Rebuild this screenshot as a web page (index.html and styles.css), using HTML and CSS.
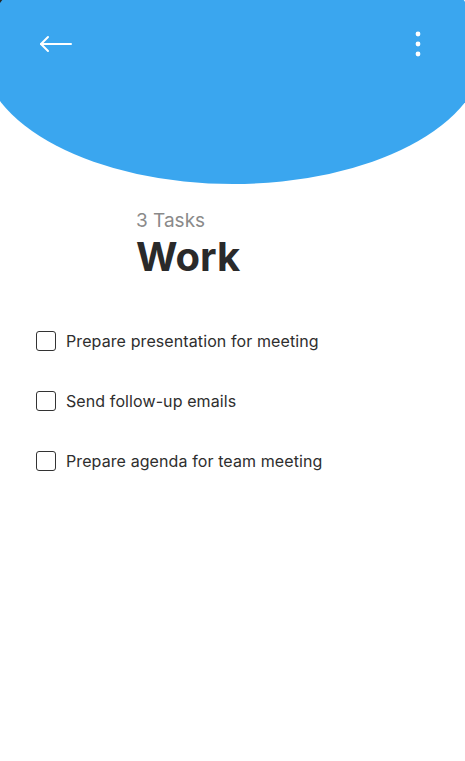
FILE: index.html
```html
<!DOCTYPE html>
<html lang="en">
<head>
<meta charset="utf-8">
<title>Work</title>
<link rel="stylesheet" href="styles.css">
</head>
<body>
<div class="app">
  <header class="hero">
    <div class="hero-bg"></div>
    <div class="topbar">
      <button class="icon-btn back" aria-label="Back">
        <svg width="34" height="18" viewBox="0 0 34 18" fill="none" stroke="#fff" stroke-width="2" stroke-linecap="round" stroke-linejoin="round">
          <path d="M3 9 H33"/>
          <path d="M10 2 L3 9 L10 16"/>
        </svg>
      </button>
      <button class="icon-btn more" aria-label="More">
        <svg width="6" height="26" viewBox="0 0 6 26" fill="#fff">
          <circle cx="3" cy="3" r="2.4"/>
          <circle cx="3" cy="13" r="2.4"/>
          <circle cx="3" cy="23" r="2.4"/>
        </svg>
      </button>
    </div>
  </header>
  <section class="title-block">
    <div class="count">3 Tasks</div>
    <h1 class="title">Work</h1>
  </section>
  <ul class="tasks">
    <li class="task"><span class="check"></span><span class="task-text">Prepare presentation for meeting</span></li>
    <li class="task"><span class="check"></span><span class="task-text">Send follow-up emails</span></li>
    <li class="task"><span class="check"></span><span class="task-text">Prepare agenda for team meeting</span></li>
  </ul>
</div>
</body>
</html>
```
FILE: styles.css
```css
* { box-sizing: border-box; }
html, body { margin: 0; padding: 0; background: #fff; }
body { font-family: Inter, "Noto Sans", sans-serif; color: #2b2b2b; }
.app { width: 465px; min-height: 761px; overflow: hidden; position: relative; }

.hero { position: relative; height: 184px; }
.hero::before {
  content: "";
  position: absolute; left: 0; top: 0;
  width: 6px; height: 12px;
  background: #262626;
  clip-path: polygon(0 0, 100% 0, 0 100%);
}
.hero-bg {
  position: absolute;
  left: -18px; top: -80px;
  width: 502px; height: 264px;
  border-radius: 50%;
  background: #3aa6ef;
}
.topbar {
  position: relative;
  display: flex; justify-content: space-between; align-items: center;
  padding: 31px 44px 0 38px;
}
.icon-btn { background: none; border: 0; padding: 0; display: flex; cursor: pointer; }

.title-block { padding: 25px 0 0 136px; }
.count { font-size: 19px; line-height: 24px; color: #8a8a8a; }
.title { margin: 0; font-size: 40px; line-height: 48px; font-weight: 700; color: #2a2a2a; }

.tasks { list-style: none; margin: 0; padding: 50px 0 0 36px; display: flex; flex-direction: column; gap: 40px; }
.task { display: flex; align-items: center; gap: 10px; height: 20px; }
.check { width: 20px; height: 20px; border: 1.5px solid #333; border-radius: 3px; flex: none; }
.task-text { font-size: 16px; letter-spacing: 0.1px; color: #2e2e2e; }
```
